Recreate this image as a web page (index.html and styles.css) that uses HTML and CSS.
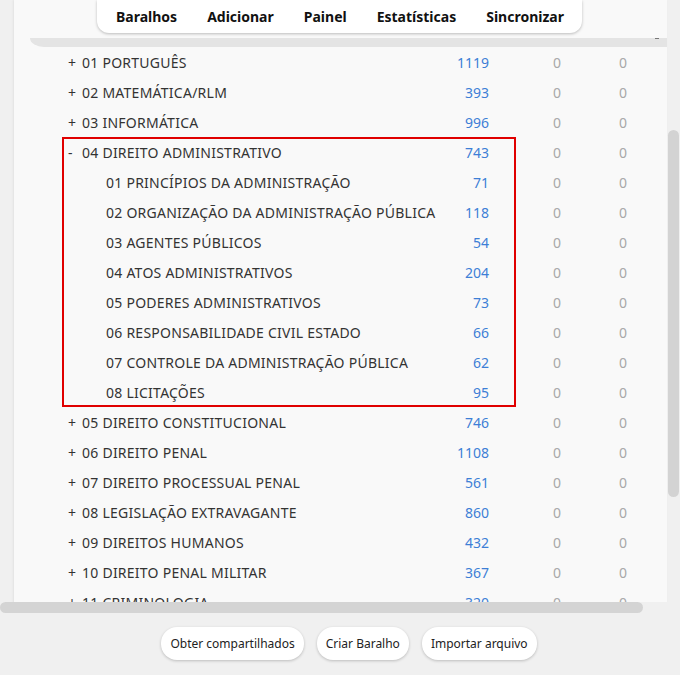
FILE: index.html
```html
<!DOCTYPE html>
<html lang="pt">
<head>
<meta charset="utf-8">
<link rel="stylesheet" href="styles.css">
</head>
<body>
<div class="app">
  <div class="scroller">
    <div class="hview">
      <div class="content">
        <div class="panel">
          <div class="thead"><span class="sort"></span></div>
          <div class="rows">
            <div class="row"><div class="main"><span class="name"><span class="tog">+</span>01 PORTUGUÊS</span><span class="cnt">1119</span></div><span class="z">0</span><span class="z">0</span></div>
            <div class="row"><div class="main"><span class="name"><span class="tog">+</span>02 MATEMÁTICA/RLM</span><span class="cnt">393</span></div><span class="z">0</span><span class="z">0</span></div>
            <div class="row"><div class="main"><span class="name"><span class="tog">+</span>03 INFORMÁTICA</span><span class="cnt">996</span></div><span class="z">0</span><span class="z">0</span></div>
            <div class="group">
              <div class="row"><div class="main"><span class="name"><span class="tog">-</span>04 DIREITO ADMINISTRATIVO</span><span class="cnt">743</span></div><span class="z">0</span><span class="z">0</span></div>
              <div class="row sub"><div class="main"><span class="name">01 PRINCÍPIOS DA ADMINISTRAÇÃO</span><span class="cnt">71</span></div><span class="z">0</span><span class="z">0</span></div>
              <div class="row sub"><div class="main"><span class="name">02 ORGANIZAÇÃO DA ADMINISTRAÇÃO PÚBLICA</span><span class="cnt">118</span></div><span class="z">0</span><span class="z">0</span></div>
              <div class="row sub"><div class="main"><span class="name">03 AGENTES PÚBLICOS</span><span class="cnt">54</span></div><span class="z">0</span><span class="z">0</span></div>
              <div class="row sub"><div class="main"><span class="name">04 ATOS ADMINISTRATIVOS</span><span class="cnt">204</span></div><span class="z">0</span><span class="z">0</span></div>
              <div class="row sub"><div class="main"><span class="name">05 PODERES ADMINISTRATIVOS</span><span class="cnt">73</span></div><span class="z">0</span><span class="z">0</span></div>
              <div class="row sub"><div class="main"><span class="name">06 RESPONSABILIDADE CIVIL ESTADO</span><span class="cnt">66</span></div><span class="z">0</span><span class="z">0</span></div>
              <div class="row sub"><div class="main"><span class="name">07 CONTROLE DA ADMINISTRAÇÃO PÚBLICA</span><span class="cnt">62</span></div><span class="z">0</span><span class="z">0</span></div>
              <div class="row sub"><div class="main"><span class="name">08 LICITAÇÕES</span><span class="cnt">95</span></div><span class="z">0</span><span class="z">0</span></div>
            </div>
            <div class="row"><div class="main"><span class="name"><span class="tog">+</span>05 DIREITO CONSTITUCIONAL</span><span class="cnt">746</span></div><span class="z">0</span><span class="z">0</span></div>
            <div class="row"><div class="main"><span class="name"><span class="tog">+</span>06 DIREITO PENAL</span><span class="cnt">1108</span></div><span class="z">0</span><span class="z">0</span></div>
            <div class="row"><div class="main"><span class="name"><span class="tog">+</span>07 DIREITO PROCESSUAL PENAL</span><span class="cnt">561</span></div><span class="z">0</span><span class="z">0</span></div>
            <div class="row"><div class="main"><span class="name"><span class="tog">+</span>08 LEGISLAÇÃO EXTRAVAGANTE</span><span class="cnt">860</span></div><span class="z">0</span><span class="z">0</span></div>
            <div class="row"><div class="main"><span class="name"><span class="tog">+</span>09 DIREITOS HUMANOS</span><span class="cnt">432</span></div><span class="z">0</span><span class="z">0</span></div>
            <div class="row"><div class="main"><span class="name"><span class="tog">+</span>10 DIREITO PENAL MILITAR</span><span class="cnt">367</span></div><span class="z">0</span><span class="z">0</span></div>
            <div class="row"><div class="main"><span class="name"><span class="tog">+</span>11 CRIMINOLOGIA</span><span class="cnt">320</span></div><span class="z">0</span><span class="z">0</span></div>
          </div>
        </div>
      </div>
      <div class="hbar"><div class="hthumb"></div></div>
    </div>
    <div class="vbar"><div class="vthumb"></div></div>
  </div>
  <div class="actions">
    <button class="btn">Obter compartilhados</button>
    <button class="btn">Criar Baralho</button>
    <button class="btn">Importar arquivo</button>
  </div>
  <nav class="topnav">
    <span class="navitem">Baralhos</span>
    <span class="navitem">Adicionar</span>
    <span class="navitem">Painel</span>
    <span class="navitem">Estatísticas</span>
    <span class="navitem">Sincronizar</span>
  </nav>
</div>
</body>
</html>
```

FILE: styles.css
```css
html, body {
  margin: 0;
  padding: 0;
}
body {
  background: #f0f0f0;
  font-family: "Noto Sans", "Open Sans", sans-serif;
  color: #333;
}
.app {
  position: relative;
  width: 680px;
  height: 675px;
  overflow: hidden;
  display: flex;
  flex-direction: column;
}
.scroller {
  display: flex;
  height: 613px;
}
.hview {
  width: 668px;
  display: flex;
  flex-direction: column;
}
.content {
  height: 602px;
  overflow: hidden;
  padding-left: 14px;
}
.panel {
  width: 653px;
  min-height: 700px;
  background: #f9f9f9;
  box-shadow: -1px 0 2px rgba(0,0,0,0.06);
  padding-top: 38px;
}
.thead {
  position: relative;
  margin-left: 16px;
  height: 9px;
  background: #e4e4e4;
  border-bottom-left-radius: 14px 9px;
}
.sort {
  position: absolute;
  right: 8px;
  top: 0;
  width: 4px;
  height: 1px;
  background: #777;
}
.row {
  display: grid;
  grid-template-columns: 1fr 66px 66px;
  height: 30px;
  align-items: center;
  padding-left: 54px;
  padding-right: 11px;
  font-size: 14px;
}
.main {
  display: flex;
  align-items: center;
  padding-right: 35px;
  white-space: nowrap;
}
.name {
  flex: 1;
  color: #333;
  letter-spacing: 0.25px;
}
.tog {
  display: inline-block;
  width: 14px;
  letter-spacing: 0;
}
.sub .name {
  padding-left: 38px;
}
.cnt {
  color: #3d7fd6;
  text-align: right;
}
.z {
  text-align: center;
  color: #a8a8a8;
}
.group {
  position: relative;
}
.group::after {
  content: "";
  position: absolute;
  top: 0;
  left: 48px;
  width: 454px;
  height: 270px;
  box-sizing: border-box;
  border: 2px solid #e00000;
  pointer-events: none;
}
.hbar {
  height: 11px;
}
.hthumb {
  width: 643px;
  height: 11px;
  background: #d4d4d4;
  border-radius: 6px;
}
.vbar {
  width: 12px;
  padding-top: 130px;
}
.vthumb {
  width: 11px;
  height: 367px;
  background: #d3d3d3;
  border-radius: 6px;
}
.actions {
  display: flex;
  justify-content: center;
  gap: 13px;
  padding-top: 14px;
  padding-left: 18px;
}
.btn {
  height: 33px;
  border: none;
  background: #fff;
  border-radius: 16px;
  box-shadow: 0 1px 3px rgba(0,0,0,0.22);
  font-family: "Noto Sans", "Open Sans", sans-serif;
  font-size: 12px;
  color: #222;
  padding: 0 9px;
}
.topnav {
  position: absolute;
  top: 0;
  left: 97px;
  width: 485px;
  height: 33px;
  box-sizing: border-box;
  background: #fff;
  border-radius: 0 0 12px 12px;
  box-shadow: 0 1px 3px rgba(0,0,0,0.25);
  display: flex;
  align-items: center;
  gap: 30px;
  padding: 0 19px 1px;
}
.navitem {
  font-family: "Noto Sans", sans-serif;
  font-weight: 700;
  font-size: 14px;
  color: #111;
}
```
